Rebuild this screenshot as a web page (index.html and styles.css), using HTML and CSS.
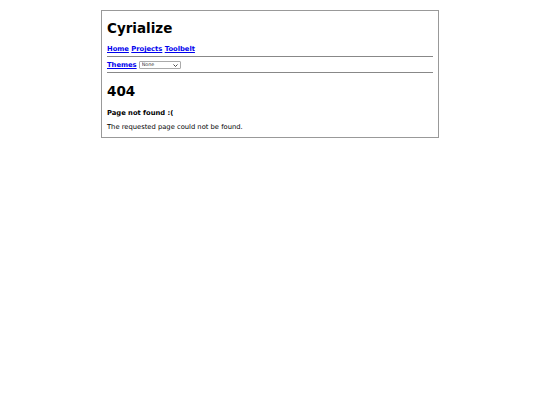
FILE: index.html
```html
<!DOCTYPE html>
<html>
<head>
<meta charset="utf-8">
<title>Cyrialize</title>
<link rel="stylesheet" href="styles.css">
</head>
<body>
<div class="page">
  <h1 class="title">Cyrialize</h1>
  <nav class="nav">
    <a href="#">Home</a> <a href="#">Projects</a> <a href="#">Toolbelt</a>
  </nav>
  <hr class="rule">
  <div class="themes">
    <a href="#">Themes</a>
    <span class="select-wrap">
      <select class="theme-select"><option>None</option></select>
      <svg class="chev" width="5" height="3" viewBox="0 0 5 3"><path d="M0.5 0.5 L2.5 2.5 L4.5 0.5" fill="none" stroke="#333" stroke-width="0.9"/></svg>
    </span>
  </div>
  <hr class="rule">
  <h1 class="code">404</h1>
  <h3 class="sub">Page not found :(</h3>
  <p class="msg">The requested page could not be found.</p>
</div>
</body>
</html>
```
FILE: styles.css
```css
html, body {
  margin: 0;
  padding: 0;
  background: #fff;
}
body {
  font-family: "DejaVu Sans", Verdana, sans-serif;
  font-size: 6.75px;
  color: #000;
}
.page {
  width: 326px;
  margin: 10px auto 0;
  border: 1px solid #999;
  padding: 9px 5px 6px;
}
.title {
  font-size: 13.5px;
  font-weight: bold;
  margin: 0 0 9px;
  line-height: 16px;
}
.nav {
  font-weight: bold;
  line-height: 8px;
}
.nav a, .themes a {
  color: #00e;
  text-decoration: underline;
}
.rule {
  border: 0;
  border-top: 1px solid #888;
  margin: 3px 0 3px;
  height: 0;
}
.themes {
  font-weight: bold;
  display: flex;
  align-items: center;
  gap: 2px;
  height: 9px;
  margin: 1px 0 0;
}
.select-wrap {
  position: relative;
  display: inline-block;
  width: 42px;
  height: 8px;
}
.theme-select {
  -webkit-appearance: none;
  appearance: none;
  display: block;
  font-family: "DejaVu Sans", sans-serif;
  font-weight: normal;
  font-size: 4.8px;
  color: #333;
  width: 42px;
  height: 8px;
  line-height: 6px;
  padding: 0 0 0 2px;
  border: 1px solid #aaa;
  border-radius: 1px;
  background: #fff;
  margin: 0;
}
.chev {
  position: absolute;
  right: 3px;
  top: 3px;
}
.code {
  font-size: 13.5px;
  font-weight: bold;
  margin: 10px 0 0;
  line-height: 16px;
}
.sub {
  font-size: 6.75px;
  font-weight: bold;
  margin: 10px 0 0;
  line-height: 8px;
}
.msg {
  margin: 6px 0 0;
  line-height: 8px;
}
```
